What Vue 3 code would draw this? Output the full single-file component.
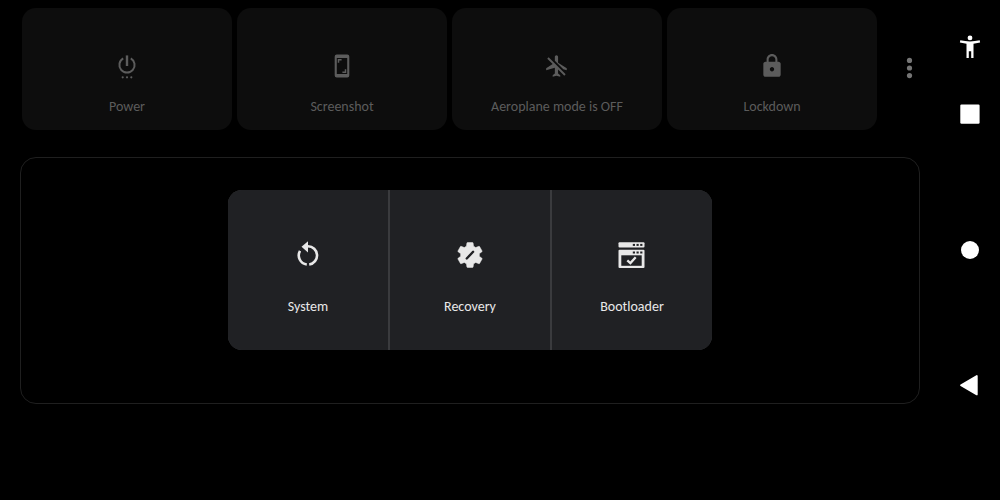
<script setup>
const actions = [
  { id: 'power', label: 'Power' },
  { id: 'screenshot', label: 'Screenshot' },
  { id: 'aeroplane', label: 'Aeroplane mode is OFF' },
  { id: 'lockdown', label: 'Lockdown' },
]
const targets = [
  { id: 'system', label: 'System' },
  { id: 'recovery', label: 'Recovery' },
  { id: 'bootloader', label: 'Bootloader' },
]
</script>

<template>
  <div class="screen">
    <main class="main">
      <div class="top">
        <div class="cards">
          <button v-for="a in actions" :key="a.id" type="button" class="card">
            <svg v-if="a.id === 'power'" class="icon" viewBox="0 0 26 26" aria-hidden="true">
              <g fill="none" stroke="currentColor" stroke-width="2">
                <path d="M9.200 5.400a7.600 7.600 0 1 0 7.600 0" />
                <path d="M13 2.400V13" stroke-width="2.400" />
              </g>
              <g fill="currentColor">
                <circle cx="8.700" cy="24.300" r="1.100" />
                <circle cx="13" cy="24.300" r="1.100" />
                <circle cx="17.300" cy="24.300" r="1.100" />
              </g>
            </svg>
            <svg v-else-if="a.id === 'screenshot'" class="icon" viewBox="0 0 26 26" aria-hidden="true">
              <path fill="currentColor" fill-rule="evenodd" d="M7.700 1.500h10.600a2 2 0 0 1 2 2v19a2 2 0 0 1-2 2H7.700a2 2 0 0 1-2-2v-19a2 2 0 0 1 2-2zM7.800 4.900v16.200h10.400V4.900z" />
              <path fill="none" stroke="currentColor" stroke-width="1.500" d="M9.500 9.800V6.700h3.100M16.500 16.200v3.100h-3.100" />
            </svg>
            <svg v-else-if="a.id === 'aeroplane'" class="icon" viewBox="0 0 24 24" aria-hidden="true">
              <path fill="currentColor" d="M13 9V3.500c0-.83-.67-1.500-1.500-1.500S10 2.830 10 3.500v3.680l7.830 7.830L21 16v-2l-8-5zM3 5.270l4.990 4.990L2 14v2l8-2.500V19l-2 1.500V22l3.500-1 3.500 1v-1.500L13 19v-3.730L18.730 21 20 19.730 4.270 4 3 5.270z" />
            </svg>
            <svg v-else class="icon" viewBox="0 0 24 24" aria-hidden="true">
              <path fill="currentColor" d="M18 8h-1V6c0-2.760-2.240-5-5-5S7 3.240 7 6v2H6c-1.100 0-2 .9-2 2v10c0 1.100.9 2 2 2h12c1.100 0 2-.9 2-2V10c0-1.100-.9-2-2-2zm-6 9c-1.100 0-2-.9-2-2s.9-2 2-2 2 .9 2 2-.9 2-2 2zm3.100-9H8.900V6c0-1.710 1.390-3.100 3.100-3.100s3.100 1.390 3.100 3.100v2z" />
            </svg>
            <span>{{ a.label }}</span>
          </button>
        </div>
        <button type="button" class="more" aria-label="More options">
          <svg viewBox="0 0 6 22" aria-hidden="true">
            <circle cx="3" cy="3.400" r="2.600" />
            <circle cx="3" cy="11" r="2.600" />
            <circle cx="3" cy="18.600" r="2.600" />
          </svg>
        </button>
      </div>

      <section class="panel" aria-label="Restart options">
        <div class="dialog">
          <button v-for="t in targets" :key="t.id" type="button" class="target">
            <svg v-if="t.id === 'system'" class="glyph" viewBox="0 0 30 30" aria-hidden="true">
              <path fill="none" stroke="currentColor" stroke-width="2.600" d="M15 6.200a9.200 9.200 0 0 1 1.200 18.300M13.800 24.500A9.200 9.200 0 0 1 7 10.800" />
              <path fill="currentColor" d="M8.500 6.700 15 1.200v11.300z" />
            </svg>
            <svg v-else-if="t.id === 'recovery'" class="glyph" viewBox="0 0 24 24" aria-hidden="true">
              <path fill="currentColor" stroke="currentColor" stroke-width=".4" stroke-linejoin="round" d="M19.430 12.980c.04-.32.07-.64.07-.98s-.03-.66-.07-.98l2.110-1.650c.19-.15.24-.42.12-.64l-2-3.460c-.12-.22-.39-.3-.61-.22l-2.490 1c-.52-.4-1.080-.73-1.690-.98l-.38-2.650C14.460 2.180 14.250 2 14 2h-4c-.25 0-.46.18-.49.42l-.38 2.650c-.61.25-1.170.59-1.690.98l-2.490-1c-.23-.09-.49 0-.61.22l-2 3.460c-.13.22-.07.49.12.64l2.110 1.650c-.04.32-.07.65-.07.98s.03.66.07.98l-2.110 1.650c-.19.15-.24.42-.12.64l2 3.460c.12.22.39.3.61.22l2.490-1c.52.4 1.080.73 1.690.98l.38 2.650c.03.24.24.42.49.42h4c.25 0 .46-.18.49-.42l.38-2.650c.61-.25 1.170-.59 1.690-.98l2.490 1c.23.09.49 0 .61-.22l2-3.460c.12-.22.07-.49-.12-.64l-2.110-1.650z" />
              <path class="cut" stroke-width="1.900" d="M9.400 14.800 14.500 9.400" />
            </svg>
            <svg v-else class="glyph" viewBox="0 0 30 30" aria-hidden="true">
              <rect x="1.500" y="2.300" width="26" height="5.200" rx="1" fill="currentColor" />
              <rect x="1.500" y="9.700" width="26" height="18.300" rx="1" fill="currentColor" />
              <rect class="hole" x="4.300" y="15.300" width="20.400" height="10.500" />
              <g class="hole">
                <rect x="15.800" y="3.900" width="2.200" height="2" />
                <rect x="19.500" y="3.900" width="2.200" height="2" />
                <rect x="23.200" y="3.900" width="2.200" height="2" />
                <rect x="15.800" y="11.500" width="2.200" height="2" />
                <rect x="19.500" y="11.500" width="2.200" height="2" />
                <rect x="23.200" y="11.500" width="2.200" height="2" />
              </g>
              <path fill="none" stroke="currentColor" stroke-width="2.300" d="m10.300 20.300 3.100 2.800 5.300-5.800" />
            </svg>
            <span>{{ t.label }}</span>
          </button>
        </div>
      </section>
    </main>

    <nav class="nav" aria-label="System navigation">
      <button type="button" aria-label="Accessibility">
        <svg viewBox="0 0 24 24" aria-hidden="true">
          <circle cx="12" cy="2.900" r="2.400" />
          <path d="M2.300 5.300Q12 7.600 21.700 5.300l.4 2.300-6.600 1.200v14.200h-2.300v-6.800h-2.400V23H8.500V8.800L1.900 7.600z" />
        </svg>
      </button>
      <button type="button" aria-label="Overview">
        <svg viewBox="0 0 24 24" aria-hidden="true"><rect x="2.300" y="2.500" width="19.300" height="19.300" rx="1.200" /></svg>
      </button>
      <button type="button" class="home" aria-label="Home">
        <svg viewBox="0 0 24 24" aria-hidden="true"><circle cx="12" cy="12" r="9" /></svg>
      </button>
      <button type="button" class="back" aria-label="Back">
        <svg viewBox="0 0 24 24" aria-hidden="true"><path d="M3 11.200 18.800 2v18.400z" stroke="#fff" stroke-width="1.800" stroke-linejoin="round" /></svg>
      </button>
    </nav>
  </div>
</template>

<style>
body {
  margin: 0;
  background: #000;
}
</style>

<style scoped>
.screen {
  display: grid;
  grid-template-columns: 1fr 60px;
  min-height: 100vh;
  background: #000;
  font-family: Carlito, Lato, "Open Sans", sans-serif;
  font-size: 14px;
  line-height: 20px;
}
button {
  margin: 0;
  padding: 0;
  border: 0;
  background: none;
  color: inherit;
  font: inherit;
}
svg {
  display: block;
}
.main {
  padding: 8px 20px 0;
}
.top {
  display: flex;
  padding-left: 2px;
  color: #5c5c5c;
}
.cards {
  flex: 1;
  display: grid;
  grid-template-columns: repeat(4, 1fr);
  gap: 5px;
}
.card {
  display: flex;
  flex-direction: column;
  align-items: center;
  gap: 18px;
  padding: 45px 0 13px;
  border-radius: 14px;
  background: #0d0d0d;
}
.icon {
  width: 26px;
  height: 26px;
}
.more {
  width: 43px;
  padding: 0 0 2px 22px;
}
.more svg {
  width: 21px;
  height: 22px;
  fill: #757575;
}
.panel {
  display: flex;
  justify-content: center;
  margin-top: 27px;
  padding: 32px;
  padding-bottom: 53px;
  border: 1px solid #1f1f1f;
  border-radius: 16px;
}
.dialog {
  flex: 0 1 484px;
  display: grid;
  grid-template-columns: repeat(3, 1fr);
  gap: 2px;
  border-radius: 14px;
  background: #3a3b3e;
  color: #e8e8e8;
  overflow: hidden;
}
.target {
  display: flex;
  flex-direction: column;
  align-items: center;
  gap: 27px;
  padding: 50px 0 33px;
  background: #202124;
}
.glyph {
  width: 30px;
  height: 30px;
}
.cut {
  stroke: #202124;
  stroke-linecap: round;
}
.hole {
  fill: #202124;
}
.nav {
  display: flex;
  flex-direction: column;
  align-items: center;
  padding-top: 35px;
}
.nav svg {
  width: 24px;
  height: 24px;
  fill: #fff;
}
.nav button + button {
  margin-top: 43px;
}
.nav button.home,
.nav button.back {
  margin-top: 112px;
}
</style>
